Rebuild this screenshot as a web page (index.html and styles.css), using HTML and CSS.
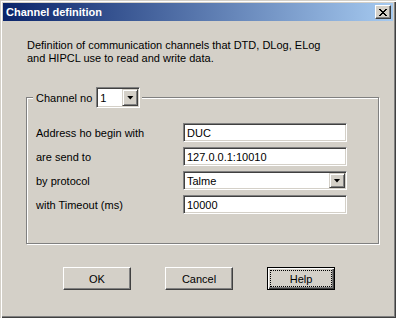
FILE: index.html
```html
<!DOCTYPE html>
<html lang="en">
<head>
    <meta charset="UTF-8">
    <title>Channel definition</title>
    <link rel="stylesheet" href="styles.css">
</head>
<body>
    <div class="window">
        <div class="titlebar">
            <span class="title">Channel definition</span>
            <div class="close-button">
                <svg width="8" height="7" viewBox="0 0 8 7">
                    <path d="M0 0h2l2 2.4 2-2.4h2L5 3.5 8 7H6L4 4.6 2 7H0l3-3.5z" fill="#000"/>
                </svg>
            </div>
        </div>

        <div class="content">
            <p class="intro">Definition of communication channels that DTD, DLog, ELog<br>and HIPCL use to read and write data.</p>

            <fieldset class="group">
                <legend>
                    <span class="legend-row">
                        <span>Channel no</span>
                        <span class="combo small">
                            <span class="combo-value">1</span>
                            <span class="drop-button"><span class="arrow"></span></span>
                        </span>
                    </span>
                </legend>

                <div class="form-grid">
                    <span class="label">Address ho begin with</span>
                    <span class="field">DUC</span>

                    <span class="label">are send to</span>
                    <span class="field">127.0.0.1:10010</span>

                    <span class="label">by protocol</span>
                    <span class="combo field">
                        <span class="combo-value">Talme</span>
                        <span class="drop-button"><span class="arrow"></span></span>
                    </span>

                    <span class="label">with Timeout (ms)</span>
                    <span class="field">10000</span>
                </div>
            </fieldset>

            <div class="button-row">
                <div class="push-button"><span class="caption">OK</span></div>
                <div class="push-button"><span class="caption">Cancel</span></div>
                <div class="push-button default"><span class="caption">Help</span></div>
            </div>
        </div>
    </div>
</body>
</html>
```

FILE: styles.css
```css
* {
    box-sizing: border-box;
}

body {
    margin: 0;
    background-color: #d4d0c8;
    font-family: "Liberation Sans", Arial, sans-serif;
    font-size: 11px;
    color: #000;
}

/* Cadre de la fenêtre classique */
.window {
    width: 396px;
    height: 318px;
    padding: 3px;
    background-color: #d4d0c8;
    box-shadow: inset 1px 1px #d4d0c8, inset 2px 2px #fff, inset -1px -1px #404040, inset -2px -2px #808080;
    display: flex;
    flex-direction: column;
}

.titlebar {
    height: 18px;
    display: flex;
    align-items: center;
    padding: 0 2px 0 3px;
    background: linear-gradient(to right, #0a246a, #a6caf0);
    color: #fff;
    font-weight: bold;
    font-size: 11px;
}

.close-button {
    margin-left: auto;
    width: 16px;
    height: 14px;
    background-color: #d4d0c8;
    border: 1px solid;
    border-color: #fff #404040 #404040 #fff;
    box-shadow: inset -1px -1px #808080;
    display: flex;
    align-items: center;
    justify-content: center;
    padding-right: 1px;
}

.close-button svg {
    display: block;
    shape-rendering: crispEdges;
}

.content {
    flex: 1;
    padding: 18px 14px 0 23px;
}

.intro {
    margin: 0 0 0 1px;
    line-height: 13px;
}

/* Groupe "Channel no" */
.group {
    margin: 22px 0 0;
    width: 353px;
    min-width: 0;
    padding: 15px 0 29px 9px;
    border: 1px solid #808080;
    box-shadow: inset 1px 1px #fff, 1px 1px #fff;
}

.group legend {
    margin-left: -3px;
    padding: 0 2px 0 3px;
    background-color: #d4d0c8;
}

.legend-row {
    display: flex;
    align-items: center;
    gap: 4px;
}

/* Champs enfoncés */
.field,
.combo {
    height: 19px;
    background-color: #fff;
    border: 1px solid;
    border-color: #808080 #fff #fff #808080;
    box-shadow: inset 1px 1px #404040, inset -1px -1px #d4d0c8;
    display: flex;
    align-items: center;
    padding: 0 3px;
}

.combo {
    padding: 1px;
    align-items: stretch;
}

.combo.small {
    width: 44px;
    height: 21px;
}

.combo-value {
    flex: 1;
    display: flex;
    align-items: center;
    padding-left: 2px;
}

.drop-button {
    width: 16px;
    background-color: #d4d0c8;
    border: 1px solid;
    border-color: #d4d0c8 #404040 #404040 #d4d0c8;
    box-shadow: inset 1px 1px #fff, inset -1px -1px #808080;
    display: flex;
    align-items: center;
    justify-content: center;
}

.arrow {
    width: 7px;
    height: 4px;
    background-color: #000;
    clip-path: polygon(0 0, 100% 0, 50% 100%);
}

.form-grid {
    display: grid;
    grid-template-columns: 147px 164px;
    grid-auto-rows: 19px;
    row-gap: 5px;
    align-items: center;
}

/* Boutons du bas */
.button-row {
    display: flex;
    gap: 34px;
    margin-top: 23px;
    padding-left: 37px;
}

.push-button {
    width: 68px;
    height: 23px;
    padding: 3px;
    background-color: #d4d0c8;
    border: 1px solid;
    border-color: #fff #404040 #404040 #fff;
    box-shadow: inset -1px -1px #808080;
}

.push-button.default {
    border: 1px solid #000;
    padding: 2px;
    box-shadow: inset 1px 1px #fff, inset -1px -1px #404040, inset -2px -2px #808080;
}

.caption {
    height: 100%;
    display: flex;
    align-items: center;
    justify-content: center;
    border: 1px solid transparent;
}

.push-button.default .caption {
    border: 1px dotted #000;
}
```
